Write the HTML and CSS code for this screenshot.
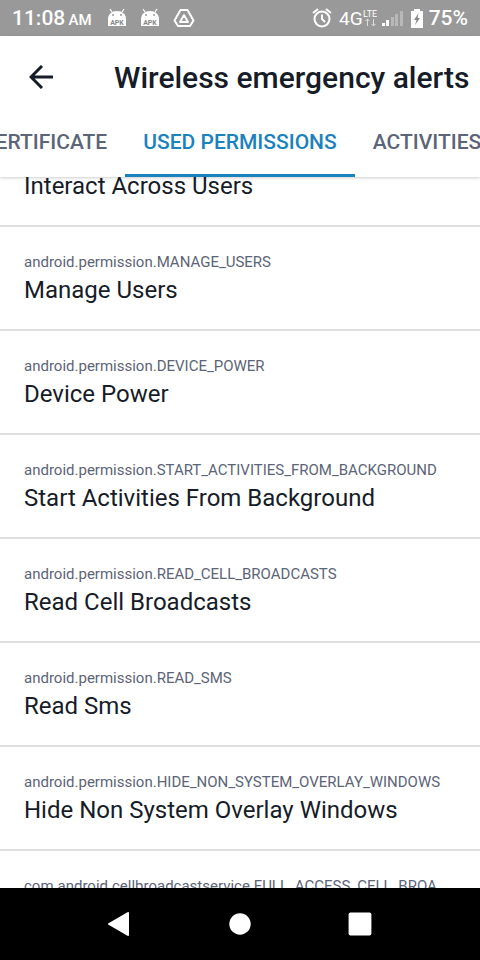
FILE: index.html
```html
<!DOCTYPE html>
<html lang="en">
<head>
<meta charset="utf-8">
<meta name="viewport" content="width=device-width, initial-scale=1">
<title>Wireless emergency alerts</title>
<link rel="stylesheet" href="styles.css">
</head>
<body>
<div class="screen">
  <div class="status">
    <span class="clock">11:08 <small>AM</small></span>
    <div class="notices">
      <svg width="20" height="20" viewBox="0 0 20 20"><path d="M1 11C1 6 5 3 10 3s9 3 9 8z" fill="#fff"/><path d="M5 4 3 1M15 4l2-3" stroke="#fff" stroke-width="1.2"/><circle cx="6" cy="7" r="1" fill="#999"/><circle cx="14" cy="7" r="1" fill="#999"/><path d="M1 11h18v7H1z" fill="#fff"/><text class="apk" x="10" y="17" text-anchor="middle">APK</text></svg>
      <svg width="20" height="20" viewBox="0 0 20 20"><path d="M1 11C1 6 5 3 10 3s9 3 9 8z" fill="#fff"/><path d="M5 4 3 1M15 4l2-3" stroke="#fff" stroke-width="1.2"/><circle cx="6" cy="7" r="1" fill="#999"/><circle cx="14" cy="7" r="1" fill="#999"/><path d="M1 11h18v7H1z" fill="#fff"/><text class="apk" x="10" y="17" text-anchor="middle">APK</text></svg>
      <svg width="22" height="20" viewBox="0 0 22 20" fill="none" stroke="#fff" stroke-width="2" stroke-linejoin="round"><path d="M7.500 2h7l6 10.500-3.500 5.500H5L1.500 12.500z"/><path d="m11 7-4 7h8z"/></svg>
    </div>
    <div class="system">
      <svg width="20" height="22" viewBox="0 0 20 22" fill="none" stroke="#fff" stroke-width="2"><circle cx="10" cy="12" r="7.500"/><path d="M1 6l5-4M19 6l-5-4M10 7.500V12l3 3"/></svg>
      <span class="net">4G</span>
      <svg width="16" height="20" viewBox="0 0 16 20"><text class="lte" x="0" y="9">LTE</text><path d="M4.500 18v-7M2.500 13l2-2 2 2M10.500 11v7M8.500 16l2 2 2-2" fill="none" stroke="#ddd" stroke-width="1"/></svg>
      <svg class="signal" width="21" height="16" viewBox="0 0 21 16"><path d="M0 13h3v3H0zM4 10h3v6H4z" fill="#fff"/><path d="M9 7h3v9H9zM13 4h3v12h-3zM18 1h3v15h-3z" fill="#b8b8b8"/></svg>
      <svg class="battery" width="12" height="19" viewBox="0 0 12 19"><path d="M3 0h6v2h3v17H0V2h3z" fill="#fff"/><path d="M7.500 4 3 11h2.500L4 16l5-7H6.500z" fill="#888"/></svg>
      <span class="percent">75%</span>
    </div>
  </div>
  <header class="appbar">
    <div class="titlebar">
      <button class="back" aria-label="Back"><svg width="24" height="24" viewBox="0 0 24 24" fill="none" stroke="#161c28" stroke-width="3"><path d="M24 12H2M13 1 2 12l11 11"/></svg></button>
      <h1>Wireless emergency alerts</h1>
    </div>
    <nav class="tabs">
      <a class="tab before" href="#certificate">CERTIFICATE</a>
      <a class="tab active" href="#permissions" aria-current="page">USED PERMISSIONS</a>
      <a class="tab" href="#activities">ACTIVITIES</a>
    </nav>
  </header>
  <main class="content">
    <ul class="list" id="permissions">
      <li class="scrolled"><span class="name">Interact Across Users</span></li>
      <li><span class="id">android.permission.MANAGE_USERS</span><span class="name">Manage Users</span></li>
      <li><span class="id">android.permission.DEVICE_POWER</span><span class="name">Device Power</span></li>
      <li><span class="id">android.permission.START_ACTIVITIES_FROM_BACKGROUND</span><span class="name">Start Activities From Background</span></li>
      <li><span class="id">android.permission.READ_CELL_BROADCASTS</span><span class="name">Read Cell Broadcasts</span></li>
      <li><span class="id">android.permission.READ_SMS</span><span class="name">Read Sms</span></li>
      <li><span class="id">android.permission.HIDE_NON_SYSTEM_OVERLAY_WINDOWS</span><span class="name">Hide Non System Overlay Windows</span></li>
      <li><span class="id">com.android.cellbroadcastservice.FULL_ACCESS_CELL_BROA</span></li>
    </ul>
  </main>
  <div class="navbar">
    <button aria-label="Back"><svg width="24" height="24" viewBox="0 0 24 24"><path d="M20 1v22L1 12z" fill="#fff" stroke="#fff" stroke-width="2" stroke-linejoin="round"/></svg></button>
    <button aria-label="Home"><svg width="24" height="24" viewBox="0 0 24 24"><circle cx="12" cy="12" r="10.700" fill="#fff"/></svg></button>
    <button aria-label="Recent apps"><svg width="24" height="24" viewBox="0 0 24 24"><rect x="0.600" y="0.600" width="22.800" height="22.800" rx="2" fill="#fff"/></svg></button>
  </div>
</div>
</body>
</html>
```
FILE: styles.css
```css
* { box-sizing: border-box; }
body {
  margin: 0;
  font-family: Roboto, "Liberation Sans", sans-serif;
  color: #161c28;
  background: #fff;
}
svg { display: block; flex: none; }
button { border: 0; padding: 0; background: none; }
.screen {
  display: flex;
  flex-direction: column;
  height: 100vh;
  overflow: hidden;
}
.status {
  flex: none;
  display: flex;
  align-items: center;
  height: 36px;
  padding: 0 12px;
  color: #fff;
  background: #999;
  font-size: 21px;
  font-weight: 500;
  white-space: nowrap;
}
.clock small { font-size: 15px; margin-left: -2px; }
.notices { display: flex; gap: 13px; margin-left: 15px; }
.system { display: flex; align-items: center; margin-left: auto; }
.net { font-size: 19px; font-weight: 400; margin-left: 7px; }
.signal { margin-left: 3px; }
.battery { margin: 0 6px 0 8px; }
.apk { font-size: 7px; font-weight: 700; fill: #888; }
.lte { font-size: 9px; font-weight: 400; fill: #fff; }
.appbar {
  flex: none;
  position: relative;
  background: #fff;
  box-shadow: 0 1px 3px rgba(0, 0, 0, 0.2);
}
.titlebar {
  display: flex;
  align-items: center;
  height: 82px;
  padding-left: 29px;
  gap: 61px;
}
h1 {
  margin: 0;
  font-size: 30px;
  font-weight: 500;
  white-space: nowrap;
}
.tabs {
  display: grid;
  grid-template-columns: minmax(0, 1fr) auto minmax(0, 1fr);
  height: 59px;
  overflow: hidden;
}
.tab {
  display: flex;
  padding: 11px 18px 0;
  border-bottom: 3px solid transparent;
  color: #5c6477;
  font-size: 21px;
  font-weight: 500;
  line-height: 26px;
  text-decoration: none;
  white-space: nowrap;
}
.before { justify-content: flex-end; }
.active { color: #1a82bd; border-color: #1a82bd; }
.content { flex: 1; min-height: 0; overflow: hidden; }
.list { list-style: none; margin: 0; padding: 0; }
.list li {
  height: 104px;
  padding: 25px 24px 0;
  border-bottom: 2px solid #dedede;
  white-space: nowrap;
}
.list .scrolled { height: 59px; margin-top: -9px; padding-top: 0; }
.id, .name { display: block; }
.id { font-size: 15px; line-height: 20px; color: #5c6477; }
.name { font-size: 24px; line-height: 36px; }
.navbar {
  flex: none;
  display: flex;
  justify-content: center;
  gap: 96px;
  height: 72px;
  background: #000;
}
```
